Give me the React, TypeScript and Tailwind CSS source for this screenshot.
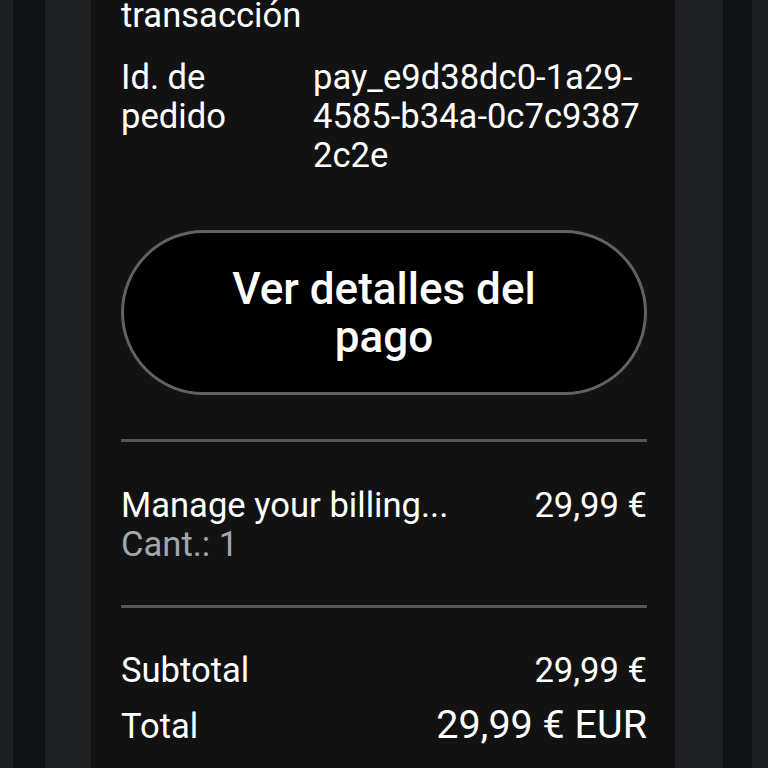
const details = [
  { label: "Fecha de la transacción", value: "12 mar 2025" },
  { label: "Id. de pedido", value: "pay_e9d38dc0-1a29-4585-b34a-0c7c93872c2e" },
];

const items = [{ name: "Manage your billing...", qty: 1, price: "29,99 €" }];

const App = () => (
  <div
    className="h-screen overflow-hidden bg-[#1d1e22] pl-[13px] pr-[16px] text-white"
    style={{ fontFamily: "Roboto, 'Noto Sans', sans-serif" }}
  >
    <div className="h-full bg-[#121317] pl-[32px] pr-[29px]">
      <div className="h-full bg-[#1f2024] pl-[46px] pr-[48px]">
        <div className="flow-root h-full bg-[#121212] pl-[30px] pr-[28px] text-[34.6px] leading-[39px]">
          <div className="-mt-[43px] flex flex-col gap-[23px]">
            {details.map((d) => (
              <div key={d.label} className="grid grid-cols-[192px_1fr]">
                <span>{d.label}</span>
                <span className="break-all">{d.value}</span>
              </div>
            ))}
          </div>

          <button className="mt-[55px] w-full rounded-full border-[3px] border-[#626262] bg-black px-16 py-[31.5px] text-[44px] font-medium leading-[48px] text-white">
            Ver detalles del pago
          </button>

          <div className="mt-[44px] h-[3px] bg-[#565656]" />

          {items.map((it) => (
            <div key={it.name} className="flex items-start justify-between pt-[44px] pb-[41px]">
              <div>
                <div>{it.name}</div>
                <div className="text-[#a2a6ad]">Cant.: {it.qty}</div>
              </div>
              <div>{it.price}</div>
            </div>
          ))}

          <div className="h-[3px] bg-[#565656]" />

          <div className="pt-[43px]">
            <div className="flex justify-between">
              <span>Subtotal</span>
              <span>29,99 €</span>
            </div>
            <div className="mt-[12px] flex items-baseline justify-between">
              <span>Total</span>
              <span className="text-[39.5px] leading-[46px]">29,99 € EUR</span>
            </div>
          </div>
        </div>
      </div>
    </div>
  </div>
);

export default App;
